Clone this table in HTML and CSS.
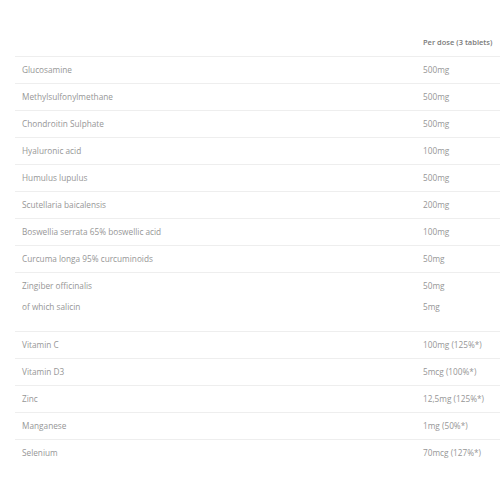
FILE: index.html
```html
<!DOCTYPE html>
<html>
<head>
<meta charset="utf-8">
<link rel="stylesheet" href="styles.css">
</head>
<body>
<div class="wrap">
  <table class="nutri">
    <thead>
      <tr><th class="name"></th><th class="dose">Per dose (3 tablets)</th></tr>
    </thead>
    <tbody>
      <tr><td>Glucosamine</td><td>500mg</td></tr>
      <tr><td>Methylsulfonylmethane</td><td>500mg</td></tr>
      <tr><td>Chondroitin Sulphate</td><td>500mg</td></tr>
      <tr><td>Hyaluronic acid</td><td>100mg</td></tr>
      <tr><td>Humulus lupulus</td><td>500mg</td></tr>
      <tr><td>Scutellaria baicalensis</td><td>200mg</td></tr>
      <tr><td>Boswellia serrata 65% boswellic acid</td><td>100mg</td></tr>
      <tr><td>Curcuma longa 95% curcuminoids</td><td>50mg</td></tr>
      <tr class="multi"><td><div>Zingiber officinalis</div><div class="sub">of which salicin</div></td><td><div>50mg</div><div class="sub">5mg</div></td></tr>
      <tr><td>Vitamin C</td><td>100mg (125%*)</td></tr>
      <tr><td>Vitamin D3</td><td>5mcg (100%*)</td></tr>
      <tr><td>Zinc</td><td>12,5mg (125%*)</td></tr>
      <tr><td>Manganese</td><td>1mg (50%*)</td></tr>
      <tr class="last"><td>Selenium</td><td>70mcg (127%*)</td></tr>
    </tbody>
  </table>
</div>
</body>
</html>
```
FILE: styles.css
```css
html, body {
  margin: 0;
  padding: 0;
  background: #fff;
}
.wrap {
  padding: 30px 0 0 15px;
  overflow: hidden;
}
.nutri {
  border-collapse: collapse;
  width: 510px;
  font-family: "Open Sans", sans-serif;
  font-size: 8.25px;
  line-height: 11px;
  color: #969696;
}
.nutri th, .nutri td {
  text-align: left;
  padding: 7px 7px 8px 7px;
  border-bottom: 1px solid #eeeeee;
  vertical-align: top;
}
.nutri th {
  font-size: 7.5px;
  font-weight: 600;
  color: #7a7a7a;
}
.nutri .name {
  width: 387px;
}
.nutri tr.multi td {
  padding-bottom: 19px;
}
.nutri .sub {
  margin-top: 10px;
}
.nutri tr.last td {
  border-bottom: none;
}
```
